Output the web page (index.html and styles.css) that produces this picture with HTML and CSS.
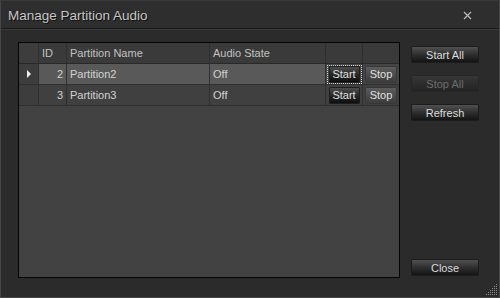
FILE: index.html
```html
<!DOCTYPE html>
<html lang="en">
<head>
  <meta charset="UTF-8">
  <title>Manage Partition Audio</title>
  <link rel="stylesheet" href="styles.css">
</head>
<body>
  <div class="window">
    <div class="titlebar">
      <span class="title">Manage Partition Audio</span>
      <svg class="close-x" width="9" height="9" viewBox="0 0 9 9">
        <path d="M1 1 L8 8 M8 1 L1 8" stroke="#b8b8b8" stroke-width="1.3" fill="none"/>
      </svg>
    </div>

    <div class="body">
      <div class="grid">
        <div class="row head">
          <div class="cell hdr"></div>
          <div class="cell">ID</div>
          <div class="cell">Partition Name</div>
          <div class="cell">Audio State</div>
          <div class="cell"></div>
          <div class="cell"></div>
        </div>
        <div class="row selected">
          <div class="cell hdr"><span class="arrow"></span></div>
          <div class="cell num">2</div>
          <div class="cell">Partition2</div>
          <div class="cell">Off</div>
          <div class="cell btn-cell"><span class="focus"><button class="cell-btn">Start</button></span></div>
          <div class="cell btn-cell"><button class="cell-btn grey">Stop</button></div>
        </div>
        <div class="row">
          <div class="cell hdr"></div>
          <div class="cell num">3</div>
          <div class="cell">Partition3</div>
          <div class="cell">Off</div>
          <div class="cell btn-cell"><button class="cell-btn">Start</button></div>
          <div class="cell btn-cell"><button class="cell-btn grey">Stop</button></div>
        </div>
      </div>

      <div class="side">
        <button class="action">Start All</button>
        <button class="action" disabled>Stop All</button>
        <button class="action">Refresh</button>
        <button class="action close">Close</button>
      </div>
    </div>

    <svg class="grip" width="14" height="14" viewBox="0 0 14 14">
      <g fill="#8a8a8a">
        <rect x="12" y="1" width="1" height="1"/>
        <rect x="10" y="3" width="1" height="1"/><rect x="12" y="3" width="1" height="1"/>
        <rect x="8" y="5" width="1" height="1"/><rect x="10" y="5" width="1" height="1"/><rect x="12" y="5" width="1" height="1"/>
        <rect x="6" y="7" width="1" height="1"/><rect x="8" y="7" width="1" height="1"/><rect x="10" y="7" width="1" height="1"/><rect x="12" y="7" width="1" height="1"/>
        <rect x="4" y="9" width="1" height="1"/><rect x="6" y="9" width="1" height="1"/><rect x="8" y="9" width="1" height="1"/><rect x="10" y="9" width="1" height="1"/><rect x="12" y="9" width="1" height="1"/>
        <rect x="2" y="11" width="1" height="1"/><rect x="4" y="11" width="1" height="1"/><rect x="6" y="11" width="1" height="1"/><rect x="8" y="11" width="1" height="1"/><rect x="10" y="11" width="1" height="1"/><rect x="12" y="11" width="1" height="1"/>
      </g>
    </svg>
  </div>
</body>
</html>
```

FILE: styles.css
```css
/* Base */
body {
  margin: 0;
  background: #2b2b2b;
  font-family: "Liberation Sans", Arial, sans-serif;
}

.window {
  position: relative;
  width: 500px;
  height: 298px;
  box-sizing: border-box;
  border: 1px solid #474747;
  border-top-color: #3a3a3a;
  background: #2b2b2b;
  display: flex;
  flex-direction: column;
}

/* Title bar */
.titlebar {
  height: 27px;
  flex: none;
  background: #2e2e2e;
  border-bottom: 1px solid #1a1a1a;
  display: flex;
  align-items: center;
  justify-content: space-between;
  padding: 0 27px 0 7px;
}

.title {
  font-size: 13.5px;
  color: #c6c6c6;
  text-shadow: 1px 1px 0 #101010;
  padding-top: 1px;
}

.close-x {
  margin-top: 1px;
}

/* Body */
.body {
  flex: 1;
  border-top: 1px solid #3a3a3a;
  display: flex;
  padding: 12px 0 19px 17px;
}

.grid {
  width: 382px;
  box-sizing: border-box;
  border: 1px solid #050505;
  background: #424242;
  font-size: 11px;
  color: #d2d2d2;
}

.row {
  display: grid;
  grid-template-columns: 20px 28px 143px 116px 37px 36px;
  height: 21px;
  background: #404040;
}

.cell {
  box-sizing: border-box;
  border-right: 1px solid #2f2f2f;
  border-bottom: 1px solid #2f2f2f;
  padding: 0 3px;
  display: flex;
  align-items: center;
  white-space: nowrap;
}

.cell:last-child {
  border-right: none;
}

.head {
  background: #3a3a3a;
  color: #c2c2c2;
}

.head .cell {
  border-bottom-color: #282828;
}

.hdr {
  background: #3d3d3d;
  justify-content: center;
}

.num {
  justify-content: flex-end;
}

.selected .cell {
  background: #595959;
}

.selected .hdr {
  background: #3d3d3d;
}

.selected .btn-cell {
  background: #454545;
}

.arrow {
  width: 0;
  height: 0;
  border-left: 4px solid #f0f0f0;
  border-top: 4px solid transparent;
  border-bottom: 4px solid transparent;
  margin-left: 1px;
}

/* Buttons inside cells */
.btn-cell {
  padding: 0;
  justify-content: center;
}

.focus {
  display: flex;
  align-items: center;
  justify-content: center;
  width: 35px;
  height: 19px;
  box-sizing: border-box;
  border: 1px dotted #d8d8d8;
}

.cell-btn {
  font-family: inherit;
  font-size: 11px;
  color: #e0e0e0;
  width: 31px;
  height: 17px;
  padding: 0;
  border: 1px solid #1e1e1e;
  border-radius: 1px;
  background: linear-gradient(#4c4c4c, #262626 55%, #0e0e0e);
}

.cell-btn.grey {
  width: 32px;
  border-color: #383838;
  background: linear-gradient(#5c5c5c, #4a4a4a 55%, #3c3c3c);
}

/* Side buttons */
.side {
  margin-left: 11px;
  padding-top: 4px;
  display: flex;
  flex-direction: column;
  gap: 12px;
}

.action {
  width: 68px;
  height: 17px;
  padding: 0;
  font-family: inherit;
  font-size: 11px;
  color: #dcdcdc;
  border: 1px solid #1c1c1c;
  border-radius: 1px;
  background: linear-gradient(#505050, #2c2c2c 55%, #141414);
}

.action:disabled {
  color: #6c6c6c;
  border-color: #262626;
  background: linear-gradient(#363636, #2c2c2c 55%, #232323);
}

.action.close {
  margin-top: auto;
  margin-bottom: 2px;
}

/* Resize grip */
.grip {
  position: absolute;
  right: 1px;
  bottom: 0;
}
```
